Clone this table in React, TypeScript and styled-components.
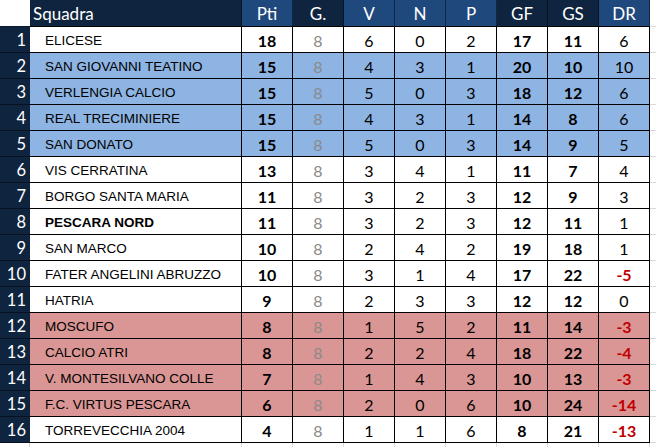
import React from "react";
import styled, { createGlobalStyle } from "styled-components";

const Global = createGlobalStyle`
  html, body { margin: 0; padding: 0; background: #ffffff; }
  body { width: 656px; height: 447px; overflow: hidden; }
`;

const NAVY = "#0f243e";
const MID = "#1f497d";
const COLS = "30px 212px repeat(8, 51px) 6px";

type Tone = "white" | "blue" | "pink";
const toneBg: Record<Tone, string> = {
  white: "#ffffff",
  blue: "#8db4e2",
  pink: "#da9694",
};

const Sheet = styled.div`
  display: flex;
  flex-direction: column;
  width: 656px;
`;

const Row = styled.div<{ $h: number }>`
  display: grid;
  grid-template-columns: ${COLS};
  height: ${(p) => p.$h}px;
`;

const Corner = styled.div`
  background: #ffffff;
  border-bottom: 1px solid #0a1a2e;
  box-sizing: border-box;
`;

const HeadCell = styled.div<{ $dark?: boolean; $left?: boolean }>`
  box-sizing: border-box;
  background: ${(p) => (p.$dark ? NAVY : MID)};
  color: #ffffff;
  font-family: Lato, "Open Sans", sans-serif;
  font-size: 17px;
  display: flex;
  align-items: center;
  justify-content: ${(p) => (p.$left ? "flex-start" : "center")};
  padding-left: ${(p) => (p.$left ? "3px" : "0")};
  border-right: 1px solid rgba(0, 0, 0, 0.45);
  border-bottom: 1px solid #000;
  padding-top: 1px;
`;

const IndexCell = styled.div`
  box-sizing: border-box;
  background: ${NAVY};
  color: #ffffff;
  font-family: Lato, "Open Sans", sans-serif;
  font-size: 16.5px;
  display: flex;
  align-items: center;
  justify-content: flex-end;
  padding-right: 4px;
  border-bottom: 1px solid #07111f;
  padding-top: 1px;
`;

const NameCell = styled.div<{ $tone: Tone; $bold?: boolean }>`
  box-sizing: border-box;
  background: ${(p) => toneBg[p.$tone]};
  color: #000;
  font-family: "Liberation Sans", Arial, sans-serif;
  font-size: 13.5px;
  font-weight: ${(p) => (p.$bold ? 700 : 400)};
  display: flex;
  align-items: center;
  padding-left: 15px;
  padding-top: 1px;
  border-right: 1px solid #000;
  border-bottom: 1px solid #000;
  white-space: nowrap;
`;

type Kind = "bold" | "gray" | "plain" | "neg";

const NumCell = styled.div<{ $tone: Tone; $kind: Kind }>`
  box-sizing: border-box;
  background: ${(p) => toneBg[p.$tone]};
  color: ${(p) =>
    p.$kind === "gray" ? "#8a8a8a" : p.$kind === "neg" ? "#c00000" : "#000"};
  font-family: Lato, "Open Sans", sans-serif;
  font-size: 16px;
  font-weight: ${(p) => (p.$kind === "bold" || p.$kind === "neg" ? 700 : 400)};
  display: flex;
  align-items: center;
  justify-content: center;
  padding-top: 1px;
  border-right: 1px solid #000;
  border-bottom: 1px solid #000;
`;

const Filler = styled.div<{ $grid?: boolean }>`
  box-sizing: border-box;
  background: #ffffff;
  border-bottom: 1px solid #d9d9d9;
  border-right: ${(p) => (p.$grid ? "1px solid #d9d9d9" : "none")};
`;

type Team = {
  name: string;
  pti: number;
  g: number;
  v: number;
  n: number;
  p: number;
  gf: number;
  gs: number;
  tone: Tone;
  bold?: boolean;
};

const teams: Team[] = [
  { name: "ELICESE", pti: 18, g: 8, v: 6, n: 0, p: 2, gf: 17, gs: 11, tone: "white" },
  { name: "SAN GIOVANNI TEATINO", pti: 15, g: 8, v: 4, n: 3, p: 1, gf: 20, gs: 10, tone: "blue" },
  { name: "VERLENGIA CALCIO", pti: 15, g: 8, v: 5, n: 0, p: 3, gf: 18, gs: 12, tone: "blue" },
  { name: "REAL TRECIMINIERE", pti: 15, g: 8, v: 4, n: 3, p: 1, gf: 14, gs: 8, tone: "blue" },
  { name: "SAN DONATO", pti: 15, g: 8, v: 5, n: 0, p: 3, gf: 14, gs: 9, tone: "blue" },
  { name: "VIS CERRATINA", pti: 13, g: 8, v: 3, n: 4, p: 1, gf: 11, gs: 7, tone: "white" },
  { name: "BORGO SANTA MARIA", pti: 11, g: 8, v: 3, n: 2, p: 3, gf: 12, gs: 9, tone: "white" },
  { name: "PESCARA NORD", pti: 11, g: 8, v: 3, n: 2, p: 3, gf: 12, gs: 11, tone: "white", bold: true },
  { name: "SAN MARCO", pti: 10, g: 8, v: 2, n: 4, p: 2, gf: 19, gs: 18, tone: "white" },
  { name: "FATER ANGELINI ABRUZZO", pti: 10, g: 8, v: 3, n: 1, p: 4, gf: 17, gs: 22, tone: "white" },
  { name: "HATRIA", pti: 9, g: 8, v: 2, n: 3, p: 3, gf: 12, gs: 12, tone: "white" },
  { name: "MOSCUFO", pti: 8, g: 8, v: 1, n: 5, p: 2, gf: 11, gs: 14, tone: "pink" },
  { name: "CALCIO ATRI", pti: 8, g: 8, v: 2, n: 2, p: 4, gf: 18, gs: 22, tone: "pink" },
  { name: "V. MONTESILVANO COLLE", pti: 7, g: 8, v: 1, n: 4, p: 3, gf: 10, gs: 13, tone: "pink" },
  { name: "F.C. VIRTUS PESCARA", pti: 6, g: 8, v: 2, n: 0, p: 6, gf: 10, gs: 24, tone: "pink" },
  { name: "TORREVECCHIA 2004", pti: 4, g: 8, v: 1, n: 1, p: 6, gf: 8, gs: 21, tone: "white" },
];

const headers: { label: string; dark: boolean }[] = [
  { label: "Pti", dark: false },
  { label: "G.", dark: true },
  { label: "V", dark: false },
  { label: "N", dark: false },
  { label: "P", dark: false },
  { label: "GF", dark: true },
  { label: "GS", dark: true },
  { label: "DR", dark: false },
];

export default function App() {
  return (
    <>
      <Global />
      <Sheet>
        <Row $h={27}>
          <Corner />
          <HeadCell $dark $left>
            Squadra
          </HeadCell>
          {headers.map((h) => (
            <HeadCell key={h.label} $dark={h.dark}>
              {h.label}
            </HeadCell>
          ))}
          <Filler />
        </Row>
        {teams.map((t, i) => {
          const dr = t.gf - t.gs;
          return (
            <Row $h={26} key={t.name}>
              <IndexCell>{i + 1}</IndexCell>
              <NameCell $tone={t.tone} $bold={t.bold}>
                {t.name}
              </NameCell>
              <NumCell $tone={t.tone} $kind="bold">{t.pti}</NumCell>
              <NumCell $tone={t.tone} $kind="gray">{t.g}</NumCell>
              <NumCell $tone={t.tone} $kind="plain">{t.v}</NumCell>
              <NumCell $tone={t.tone} $kind="plain">{t.n}</NumCell>
              <NumCell $tone={t.tone} $kind="plain">{t.p}</NumCell>
              <NumCell $tone={t.tone} $kind="bold">{t.gf}</NumCell>
              <NumCell $tone={t.tone} $kind="bold">{t.gs}</NumCell>
              <NumCell $tone={t.tone} $kind={dr < 0 ? "neg" : "plain"}>{dr}</NumCell>
              <Filler />
            </Row>
          );
        })}
        <Row $h={6}>
          <Filler $grid />
          <Filler $grid />
          {headers.map((h) => (
            <Filler $grid key={h.label} />
          ))}
          <Filler />
        </Row>
      </Sheet>
    </>
  );
}
